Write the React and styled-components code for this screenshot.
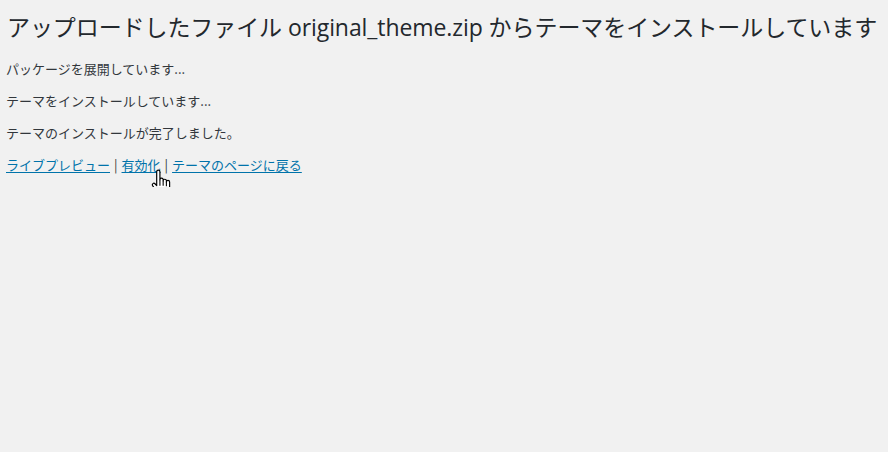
import React from 'react';
import styled, { createGlobalStyle } from 'styled-components';

const GlobalStyle = createGlobalStyle`
  html, body {
    margin: 0;
    background: #f1f1f1;
  }
  body {
    font-family: "Noto Sans CJK JP", "Open Sans", sans-serif;
    color: #23282d;
  }
`;

const Wrap = styled.div`
  position: relative;
  padding: 0 6px;
`;

const Title = styled.h1`
  font-family: "Open Sans", "Noto Sans CJK JP", sans-serif;
  font-size: 23px;
  font-weight: 400;
  line-height: 1.3;
  margin: 0;
  padding: 13px 0 4px 1px;
  color: #23282d;
  white-space: nowrap;
  letter-spacing: -0.08px;
`;

const Line = styled.p`
  font-size: 13px;
  line-height: 1.5;
  margin: 12.5px 0;
  color: #32373c;
  white-space: nowrap;
`;

const Link = styled.a`
  color: #0073aa;
  text-decoration: underline;
  text-underline-offset: 2px;
`;

const Sep = styled.span`
  margin: 0 4px;
  color: #32373c;
`;

const Cursor = styled.svg`
  position: absolute;
  left: 151px;
  top: 169px;
  width: 20px;
  height: 28px;
  overflow: visible;
`;

const HandCursor = () => (
  <Cursor viewBox="0 0 18 26">
    <path
      d="M5 2.5a1.5 1.5 0 0 1 3 0V10a1.5 1.5 0 0 1 3 0v1a1.5 1.5 0 0 1 3 0v1a1.5 1.5 0 0 1 3 0v6c0 2-1 3.5-2 4.5V25H7v-2c-1-1-2.5-3-4-5l-1.8-2.6a1.4 1.4 0 0 1 2.2-1.7L5 15.5z"
      fill="#fff"
      stroke="#000"
      strokeWidth="1.1"
      strokeLinejoin="round"
    />
    <path d="M8 10v5.5M11 11v4.5M14 12v4" stroke="#000" strokeWidth="1" fill="none" />
  </Cursor>
);

const App = () => (
  <>
    <GlobalStyle />
    <Wrap>
      <Title>アップロードしたファイル original_theme.zip からテーマをインストールしています</Title>
      <Line>パッケージを展開しています...</Line>
      <Line>テーマをインストールしています...</Line>
      <Line>テーマのインストールが完了しました。</Line>
      <Line>
        <Link href="#">ライブプレビュー</Link>
        <Sep>|</Sep>
        <Link href="#">有効化</Link>
        <Sep>|</Sep>
        <Link href="#">テーマのページに戻る</Link>
      </Line>
      <HandCursor />
    </Wrap>
  </>
);

export default App;
